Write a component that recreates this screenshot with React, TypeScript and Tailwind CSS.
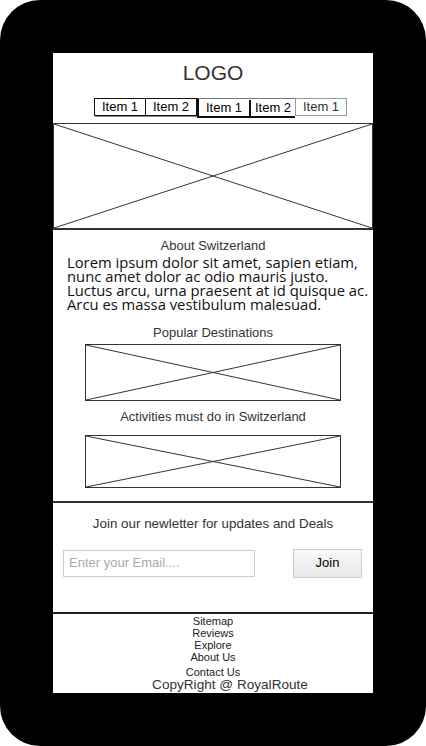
import React from "react";

function XBox({ className }: { className: string }) {
  return (
    <div className={"relative border border-[#333] " + className}>
      <svg className="absolute inset-0 w-full h-full" preserveAspectRatio="none" viewBox="0 0 100 100">
        <line x1="0" y1="0" x2="100" y2="100" stroke="#333" strokeWidth="1" vectorEffect="non-scaling-stroke" />
        <line x1="100" y1="0" x2="0" y2="100" stroke="#333" strokeWidth="1" vectorEffect="non-scaling-stroke" />
      </svg>
    </div>
  );
}

export default function App() {
  const sans = { fontFamily: '"Liberation Sans", Arial, sans-serif' };
  return (
    <div className="w-[426px] h-[746px] bg-white" style={sans}>
      <div className="w-[426px] h-[746px] bg-black rounded-[40px] pt-[53px] pl-[53px]">
        <div className="w-[320px] h-[640px] bg-white overflow-hidden flex flex-col">
          <div className="pt-[8px] h-[32px] text-center text-[21px] leading-[24px] text-[#333]">LOGO</div>
          <div className="flex items-start ml-[41px] mt-[13px] h-[18px] text-[13px] leading-[16px] text-black">
            <div className="flex h-[18px] border border-[#111] shadow-[1px_1px_0_#888]">
              <span className="w-[50px] text-center">Item 1</span>
              <span className="w-[51px] text-center border-l border-[#111]">Item 2</span>
            </div>
            <div className="flex h-[20px] border-l-2 border-b-2 border-t border-[#111] border-t-[#777] pt-[1px]">
              <span className="w-[50px] text-center">Item 1</span>
              <span className="w-[46px] text-center border-l-2 border-[#111]">Item 2</span>
            </div>
            <div className="flex h-[18px] border border-[#999] text-[#333]">
              <span className="w-[50px] text-center">Item 1</span>
            </div>
          </div>
          <XBox className="mt-[7px] h-[107px] w-[320px] border-b-2" />
          <div className="mt-[8px] text-center text-[13px] leading-[16px] text-[#333]">About Switzerland</div>
          <p
            className="ml-[14px] w-[304px] mt-[1px] text-[14.8px] leading-[14px] text-[#111]"
            style={{ fontFamily: '"Open Sans", sans-serif' }}
          >
            Lorem ipsum dolor sit amet, sapien etiam, nunc amet dolor ac odio mauris justo. Luctus arcu, urna praesent at id quisque ac. Arcu es massa vestibulum malesuad.
          </p>
          <div className="mt-[14px] text-center text-[13px] leading-[16px] text-[#333]">Popular Destinations</div>
          <XBox className="mt-[3px] h-[57px] w-[256px] self-center" />
          <div className="mt-[8px] text-center text-[13px] leading-[16px] text-[#333]">Activities must do in Switzerland</div>
          <XBox className="mt-[10px] h-[53px] w-[256px] self-center" />
          <div className="mt-[13px] h-[2px] bg-[#333]" />
          <div className="mt-[13px] text-center text-[13.4px] leading-[16px] text-[#333]">Join our newletter for updates and Deals</div>
          <div className="mt-[17px] flex items-center h-[28px]">
            <div className="ml-[10px] w-[192px] h-[27px] border border-[#ccc] flex items-center pl-[5px] text-[13px] text-[#aaa]">
              Enter your Email....
            </div>
            <div className="ml-[38px] w-[69px] h-[29px] border border-[#ccc] bg-gradient-to-b from-[#fafafa] to-[#e8e8e8] flex items-center justify-center text-[13px] text-black">
              Join
            </div>
          </div>
          <div className="mt-[35px] h-[2px] bg-[#222]" />
          <div className="mt-[1px] flex flex-col items-center text-[11px] leading-[12px] text-[#222]">
            <span>Sitemap</span>
            <span>Reviews</span>
            <span>Explore</span>
            <span>About Us</span>
            <span className="mt-[3px]">Contact Us</span>
          </div>
          <div className="pl-[34px] text-center text-[13.6px] leading-[13px] text-[#333]">CopyRight @ RoyalRoute</div>
        </div>
      </div>
    </div>
  );
}
